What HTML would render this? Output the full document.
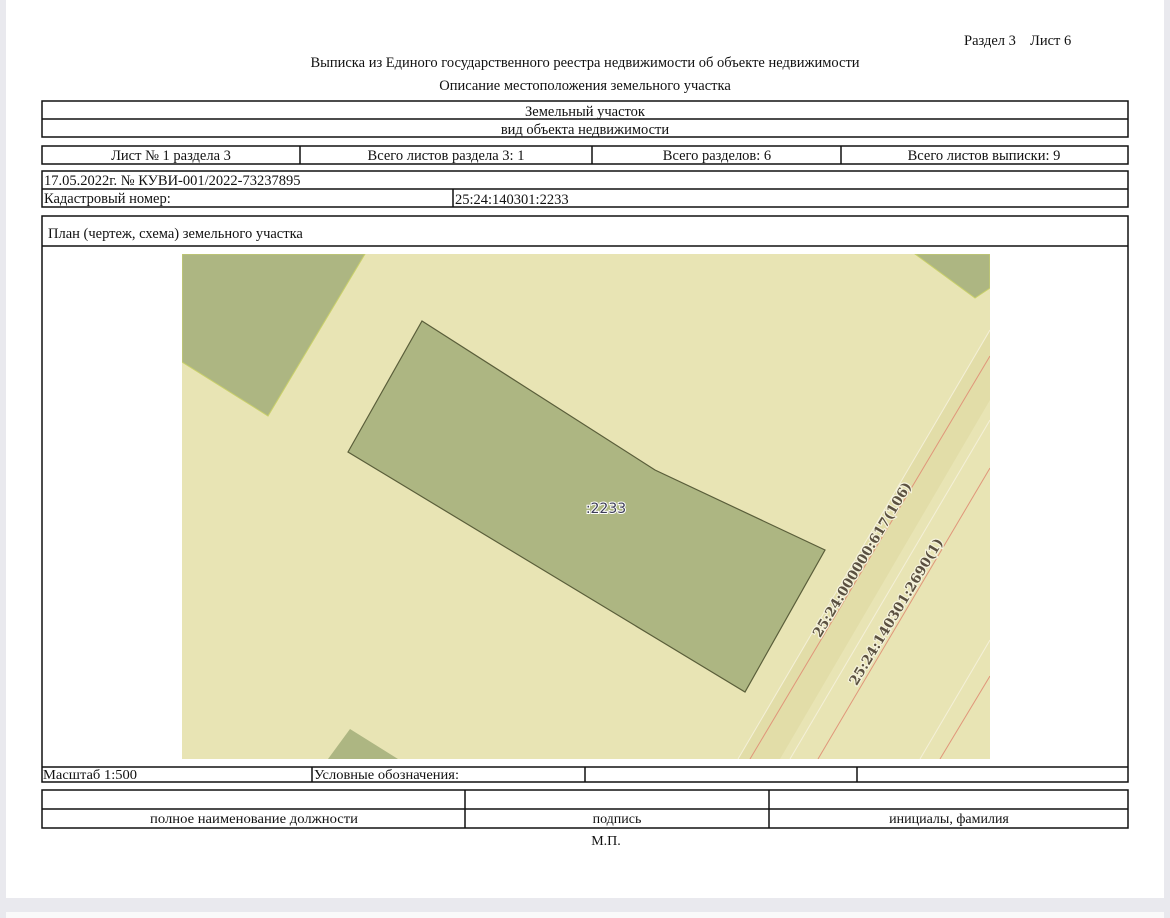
<!DOCTYPE html>
<html><head><meta charset="utf-8"><style>
html,body{margin:0;padding:0;background:#e9e9ee;}
svg{display:block}
</style></head><body>
<svg width="1170" height="918" viewBox="0 0 1170 918" xmlns="http://www.w3.org/2000/svg" font-family="Liberation Serif, serif" font-size="14.5" fill="#111">
<rect x="0" y="0" width="1170" height="918" fill="#e9e9ee"/>
<rect x="6" y="0" width="1158" height="898" fill="#fff"/>
<rect x="6" y="912" width="1158" height="10" fill="#fafafa"/>

<rect x="182" y="254" width="808" height="505" fill="#e8e4b4"/>
<clipPath id="c"><rect x="182" y="254" width="808" height="505"/></clipPath>
<g clip-path="url(#c)">
<polygon points="182,254 365,254 268,416 182,362" fill="#adb682" stroke="#c9d06a" stroke-width="1"/>
<polygon points="915,254 990,254 990,288 975,298" fill="#adb682" stroke="#c9d06a" stroke-width="1"/>
<polygon points="328,759 350,729 398,759" fill="#adb682"/>
<polygon points="738,759 990,330 990,400 780,759" fill="#e2dda8"/>
<line x1="738" y1="759" x2="990" y2="330" stroke="#f4f0d8" stroke-width="1"/>
<line x1="790" y1="759" x2="990" y2="420" stroke="#f4f0d8" stroke-width="1"/>
<line x1="750" y1="759" x2="990" y2="356" stroke="#e0967a" stroke-width="1"/>
<line x1="818" y1="759" x2="990" y2="468" stroke="#e0967a" stroke-width="1"/>
<line x1="940" y1="759" x2="990" y2="676" stroke="#e0967a" stroke-width="1"/>
<line x1="920" y1="759" x2="990" y2="640" stroke="#f4f0d8" stroke-width="1"/>
<polygon points="422,321 655,470 825,550 745,692 348,452" fill="#adb682" stroke="#5a5e3a" stroke-width="1.2"/>
<text x="606" y="513" text-anchor="middle" font-family="DejaVu Sans, sans-serif" font-size="14" fill="#3e3e58" stroke="#fff" stroke-width="2" paint-order="stroke">:2233</text>
<text transform="translate(866,562) rotate(-59)" text-anchor="middle" font-family="DejaVu Serif, serif" font-size="13.5" font-weight="bold" fill="#5a5040" stroke="#f5f2dc" stroke-width="2.5" paint-order="stroke">25:24:000000:617(106)</text>
<text transform="translate(900,614) rotate(-59)" text-anchor="middle" font-family="DejaVu Serif, serif" font-size="13.5" font-weight="bold" fill="#5a5040" stroke="#f5f2dc" stroke-width="2.5" paint-order="stroke">25:24:140301:2690(1)</text>
</g>

<g fill="none" stroke="#111" stroke-width="1.5">
<rect x="42" y="101" width="1086" height="36"/><line x1="42" y1="119" x2="1128" y2="119"/>
<rect x="42" y="146" width="1086" height="18"/>
<line x1="300" y1="146" x2="300" y2="164"/><line x1="592" y1="146" x2="592" y2="164"/><line x1="841" y1="146" x2="841" y2="164"/>
<rect x="42" y="171" width="1086" height="36"/><line x1="42" y1="189" x2="1128" y2="189"/><line x1="453" y1="189" x2="453" y2="207"/>
<rect x="42" y="216" width="1086" height="566"/><line x1="42" y1="246" x2="1128" y2="246"/><line x1="42" y1="767" x2="1128" y2="767"/>
<line x1="312" y1="767" x2="312" y2="782"/><line x1="585" y1="767" x2="585" y2="782"/><line x1="857" y1="767" x2="857" y2="782"/>
<rect x="42" y="790" width="1086" height="38"/><line x1="42" y1="809" x2="1128" y2="809"/>
<line x1="465" y1="790" x2="465" y2="828"/><line x1="769" y1="790" x2="769" y2="828"/>
</g>

<text x="964" y="45">Раздел 3</text>
<text x="1030" y="45">Лист 6</text>
<text x="585" y="67" text-anchor="middle">Выписка из Единого государственного реестра недвижимости об объекте недвижимости</text>
<text x="585" y="90" text-anchor="middle">Описание местоположения земельного участка</text>
<text x="585" y="116" text-anchor="middle">Земельный участок</text>
<text x="585" y="134" text-anchor="middle">вид объекта недвижимости</text>
<text x="171" y="160" text-anchor="middle">Лист № 1 раздела 3</text>
<text x="446" y="160" text-anchor="middle">Всего листов раздела 3: 1</text>
<text x="717" y="160" text-anchor="middle">Всего разделов: 6</text>
<text x="984" y="160" text-anchor="middle">Всего листов выписки: 9</text>
<text x="44" y="185">17.05.2022г. № КУВИ-001/2022-73237895</text>
<text x="44" y="203">Кадастровый номер:</text>
<text x="455" y="204">25:24:140301:2233</text>
<text x="48" y="238">План (чертеж, схема) земельного участка</text>
<text x="43" y="779" font-size="14" textLength="94" lengthAdjust="spacingAndGlyphs">Масштаб 1:500</text>
<text x="314" y="779" font-size="14" textLength="145" lengthAdjust="spacingAndGlyphs">Условные обозначения:</text>
<text x="254" y="823" text-anchor="middle" font-size="14" textLength="208" lengthAdjust="spacingAndGlyphs">полное наименование должности</text>
<text x="617" y="823" text-anchor="middle" font-size="14">подпись</text>
<text x="949" y="823" text-anchor="middle" font-size="14">инициалы, фамилия</text>
<text x="606" y="845" text-anchor="middle" font-size="14">М.П.</text>
</svg>
</body></html>
